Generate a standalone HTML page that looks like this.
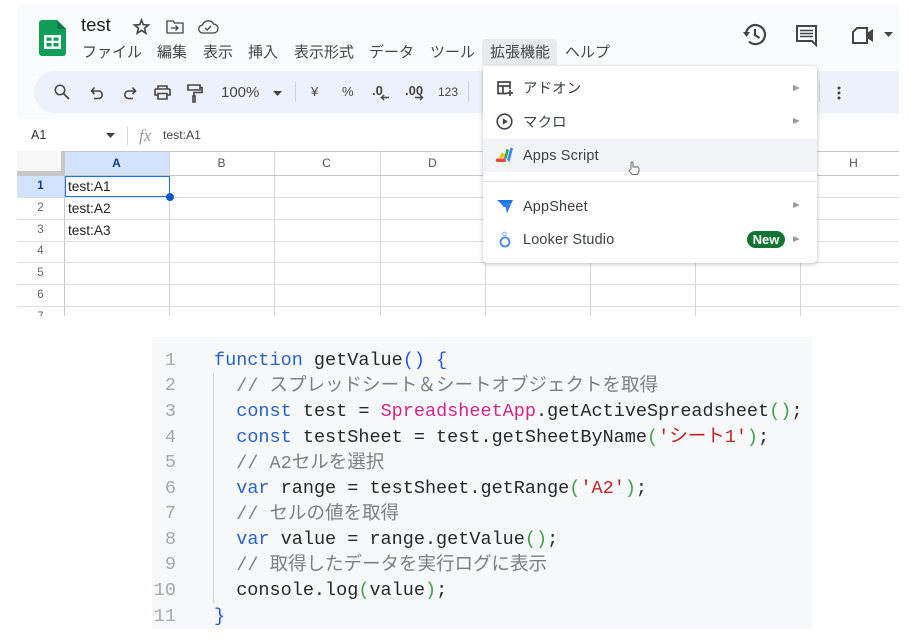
<!DOCTYPE html>
<html lang="ja"><head><meta charset="utf-8"><style>
html,body{margin:0;padding:0;background:#fff}
body{width:909px;height:640px;position:relative;overflow:hidden;font-family:"Liberation Sans","Noto Sans CJK JP",sans-serif;color:#333;filter:blur(.3px)}
.a,.a2{position:absolute;white-space:pre}
.m{position:absolute;top:44px;font-size:15px;line-height:18px;color:#444;white-space:pre}
svg{position:absolute;overflow:visible}
.ic{fill:none;stroke:#444;stroke-width:1.6}
.tb{position:absolute;top:84px;font-size:13px;line-height:16px;color:#444}
.ln{position:absolute;background:#dcdcdc}
.ch{position:absolute;top:156px;font-size:12px;line-height:14px;color:#555;text-align:center;width:105px}
.rh{position:absolute;left:17px;width:47px;text-align:center;font-size:11.5px;line-height:13px;color:#666}
.cell{position:absolute;left:68px;font-size:13.7px;line-height:16px;color:#222}
.mi{position:absolute;left:523px;font-size:14.4px;line-height:18px;color:#3c4043;white-space:pre;letter-spacing:.2px}
.ar{position:absolute;left:793px;width:0;height:0;border-left:7px solid #999;border-top:3.5px solid transparent;border-bottom:3.5px solid transparent}
.code{position:absolute;left:152px;top:337px;width:660px;height:292px;background:#f7f8fa}
.l{position:absolute;left:214px;font:18.5px/26px "Liberation Mono","Noto Sans CJK JP",monospace;color:#24292e;white-space:pre}
.n{position:absolute;width:24px;left:152px;text-align:right;font:18.5px/26px "Liberation Mono",monospace;color:#a3a8ad}
.k{color:#2a62c0}.c{color:#7b7f84}.p{color:#d0288a}.g{color:#3fa14f}.s{color:#b8262a}.b{color:#1f55e0}
</style></head><body>
<!-- Sheets header -->
<div style="position:absolute;left:17px;top:5px;width:882px;height:146px;background:#f9fbfd"></div>
<div style="position:absolute;left:34px;top:71px;width:865px;height:42px;background:#edf2fa;border-radius:21px 0 0 21px"></div>
<div style="position:absolute;left:17px;top:119px;width:882px;height:32px;background:#fff"></div>
<div style="position:absolute;left:482px;top:39px;width:75px;height:26px;background:#e8ebee;border-radius:4px 4px 0 0"></div>

<svg style="left:39px;top:20px" width="27" height="36" viewBox="0 0 27 36"><path d="M3 0H18L27 9V33a3 3 0 0 1-3 3H3a3 3 0 0 1-3-3V3a3 3 0 0 1 3-3z" fill="#0f9d58"/><path d="M18 0L27 9H20a2 2 0 0 1-2-2z" fill="#0b7a43"/><path d="M5 15H22V29H5zM7.500 17.500V20.800H12.500V17.500zM14.500 17.500V20.800H19.500V17.500zM7.500 23V26.500H12.500V23zM14.500 23V26.500H19.500V23z" fill="#fff" fill-rule="evenodd"/></svg>
<div class="a" style="left:81px;top:14px;font-size:18.500px;line-height:22px;color:#222">test</div>
<svg style="left:133px;top:18px" width="17" height="17" viewBox="0 0 17 17"><path class="ic" d="M8.500 2L10.300 6.700L15.500 7L11.500 10.200L12.800 15.200L8.500 12.400L4.200 15.200L5.500 10.200L1.500 7L6.700 6.700z" stroke-width="1.300"/></svg>
<svg style="left:166px;top:19px" width="18" height="15" viewBox="0 0 18 15"><path class="ic" style="stroke-width:1.300" d="M1 2H7L8.500 4H17V14H1zM5 9H12M9.500 6.500L12 9L9.500 11.500"/></svg>
<svg style="left:198px;top:18px" width="20" height="16" viewBox="0 0 20 16"><path class="ic" style="stroke-width:1.300" d="M5 15A4 4 0 0 1 4.500 7A6 6 0 0 1 15.500 6A4.500 4.500 0 0 1 15.500 15zM7 10L9.200 12L13 8"/></svg>

<div class="m" style="left:82px">ファイル</div>
<div class="m" style="left:157px">編集</div>
<div class="m" style="left:203px">表示</div>
<div class="m" style="left:248px">挿入</div>
<div class="m" style="left:294px">表示形式</div>
<div class="m" style="left:369px">データ</div>
<div class="m" style="left:430px">ツール</div>
<div class="m" style="left:490px">拡張機能</div>
<div class="m" style="left:565px">ヘルプ</div>

<!-- right icons -->
<svg style="left:743px;top:23px" width="24" height="23" viewBox="0 0 24 23"><path class="ic" style="stroke-width:2.200" d="M3 11.500A9.500 9.500 0 1 1 6 18.500M12 6V12L16.500 15"/><path d="M0 9H7L3.500 14z" fill="#444"/></svg>
<svg style="left:796px;top:25px" width="22" height="21" viewBox="0 0 22 21"><path class="ic" style="stroke-width:2" d="M1 1H20V20L16 16H1z"/><path class="ic" style="stroke-width:1.500" d="M4 5.500H17M4 8.500H17M4 11.500H17"/></svg>
<svg style="left:852px;top:27px" width="22" height="17" viewBox="0 0 22 17"><path class="ic" style="stroke-width:2" d="M5 1H15V16H1V5z"/><path d="M15 6L21 2V15L15 11z" fill="#444"/></svg>
<svg style="left:884px;top:32px" width="9" height="5" viewBox="0 0 9 5"><path d="M0 0H9L4.500 5z" fill="#444"/></svg>

<!-- toolbar -->
<svg style="left:54px;top:84px" width="16" height="16" viewBox="0 0 16 16"><circle class="ic" cx="6" cy="6" r="4.700" style="stroke-width:1.500"/><path class="ic" d="M9.500 9.500L15 15" style="stroke-width:1.800"/></svg>
<svg style="left:90px;top:86px" width="14" height="14" viewBox="0 0 14 14"><path class="ic" d="M2 5H9A3.800 3.800 0 0 1 9 12.500H4M4.500 1.500L1.500 5L4.500 8"/></svg>
<svg style="left:123px;top:86px" width="14" height="14" viewBox="0 0 14 14"><path class="ic" d="M12 5H5A3.800 3.800 0 0 0 5 12.500H10M9.500 1.500L12.500 5L9.500 8"/></svg>
<svg style="left:154px;top:85px" width="17" height="15" viewBox="0 0 17 15"><path class="ic" d="M4 4V1H13V4M4 10H1V5A1 1 0 0 1 2 4H15A1 1 0 0 1 16 5V10H13M4 8.500H13V14H4z"/></svg>
<svg style="left:187px;top:84px" width="16" height="19" viewBox="0 0 16 19"><path class="ic" d="M1 1H13V6H1zM13 3.500H15V8.500H7V12M6 12H8V18H6z"/></svg>
<div class="tb" style="left:221px;font-size:15px;top:85px">100%</div>
<svg style="left:273px;top:91px" width="9" height="5" viewBox="0 0 9 5"><path d="M0 0H9L4.500 5z" fill="#444"/></svg>
<div class="ln" style="left:295px;top:81px;width:1px;height:21px;background:#cfd3d8"></div>
<div class="tb" style="left:311px">¥</div>
<div class="tb" style="left:342px">%</div>
<div class="tb" style="left:372px;font-weight:bold;font-size:13px;top:83px">.0</div>
<svg style="left:380px;top:94px" width="10" height="7" viewBox="0 0 10 7"><path class="ic" style="stroke-width:1.400" d="M9 3.500H1.500M4 1L1.500 3.500L4 6"/></svg>
<div class="tb" style="left:405px;font-weight:bold;top:83px">.00</div>
<svg style="left:414px;top:94px" width="10" height="7" viewBox="0 0 10 7"><path class="ic" style="stroke-width:1.400" d="M1 3.500H8.500M6 1L8.500 3.500L6 6"/></svg>
<div class="tb" style="left:438px;font-size:12px">123</div>
<div class="ln" style="left:468px;top:81px;width:1px;height:21px;background:#cfd3d8"></div>
<div class="ln" style="left:819px;top:81px;width:1px;height:21px;background:#cfd3d8"></div>
<svg style="left:837px;top:86px" width="4" height="14" viewBox="0 0 4 14"><circle cx="2" cy="2" r="1.500" fill="#444"/><circle cx="2" cy="7" r="1.500" fill="#444"/><circle cx="2" cy="12" r="1.500" fill="#444"/></svg>

<!-- formula bar -->
<div class="a" style="left:31px;top:127px;font-size:12.500px;line-height:16px;color:#333">A1</div>
<svg style="left:106px;top:133px" width="9" height="5" viewBox="0 0 9 5"><path d="M0 0H9L4.500 5z" fill="#444"/></svg>
<div class="ln" style="left:127px;top:127px;width:1px;height:18px;background:#d5d5d5"></div>
<div class="a" style="left:139px;top:127px;font:italic 17px/18px 'Liberation Serif',serif;color:#999">fx</div>
<div class="a" style="left:163px;top:127px;font-size:12.200px;line-height:16px;color:#444">test:A1</div>

<!-- grid -->
<div style="position:absolute;left:17px;top:151px;width:882px;height:165px;background:#fff;overflow:hidden">
<div style="position:absolute;left:0;top:0;width:882px;height:1px;background:#c7c7c7"></div>
<div style="position:absolute;left:0;top:0;width:44px;height:20px;background:#f8f8f8;border-right:4px solid #c7c7c7;border-bottom:4px solid #c7c7c7"></div>
<div style="position:absolute;left:48px;top:1px;width:104px;height:24px;background:#d3e3fd"></div>
<div style="position:absolute;left:0;top:25px;width:47px;height:22px;background:#d3e3fd"></div>
</div>
<div class="ln" style="left:64px;top:151px;width:1px;height:165px;background:#c7c7c7"></div>
<div class="ln" style="left:169px;top:151px;width:1px;height:165px;background:#d5d5d5"></div>
<div class="ln" style="left:274px;top:151px;width:1px;height:165px;background:#d5d5d5"></div>
<div class="ln" style="left:380px;top:151px;width:1px;height:165px;background:#d5d5d5"></div>
<div class="ln" style="left:485px;top:151px;width:1px;height:165px;background:#d5d5d5"></div>
<div class="ln" style="left:590px;top:151px;width:1px;height:165px;background:#d5d5d5"></div>
<div class="ln" style="left:695px;top:151px;width:1px;height:165px;background:#d5d5d5"></div>
<div class="ln" style="left:800px;top:151px;width:1px;height:165px;background:#d5d5d5"></div>
<div class="ln" style="left:17px;top:175px;width:882px;height:1px;background:#c7c7c7"></div>
<div class="ln" style="left:17px;top:197px;width:882px;height:1px;background:#e0e0e0"></div>
<div class="ln" style="left:17px;top:219px;width:882px;height:1px;background:#e0e0e0"></div>
<div class="ln" style="left:17px;top:241px;width:882px;height:1px;background:#e0e0e0"></div>
<div class="ln" style="left:17px;top:262px;width:882px;height:1px;background:#e0e0e0"></div>
<div class="ln" style="left:17px;top:284px;width:882px;height:1px;background:#e0e0e0"></div>
<div class="ln" style="left:17px;top:306px;width:882px;height:1px;background:#e0e0e0"></div>

<div class="ch" style="left:64px;font-weight:bold;color:#0b3f8a">A</div>
<div class="ch" style="left:169px">B</div>
<div class="ch" style="left:274px">C</div>
<div class="ch" style="left:380px">D</div>
<div class="ch" style="left:801px">H</div>
<div class="rh" style="top:180px;font-weight:bold;color:#0b3f8a">1</div>
<div class="rh" style="top:202px">2</div>
<div class="rh" style="top:224px">3</div>
<div class="rh" style="top:245px">4</div>
<div class="rh" style="top:267px">5</div>
<div class="rh" style="top:289px">6</div>
<div style="position:absolute;left:17px;top:311px;width:47px;height:5px;overflow:hidden"><div class="rh" style="left:0;top:0">7</div></div>
<div class="cell" style="top:179px">test:A1</div>
<div class="cell" style="top:201px">test:A2</div>
<div class="cell" style="top:223px">test:A3</div>
<div style="position:absolute;left:65px;top:176px;width:102.500px;height:19px;border:1.500px solid #1a73e8"></div>
<div style="position:absolute;left:166px;top:193px;width:8px;height:8px;border-radius:50%;background:#0b57d0"></div>

<!-- menu -->
<div style="position:absolute;left:483px;top:66px;width:334px;height:197px;background:#fff;border-radius:4px;box-shadow:0 1px 4px rgba(60,64,67,.35)"></div>
<div style="position:absolute;left:483px;top:139px;width:334px;height:33px;background:#f1f3f4"></div>
<div style="position:absolute;left:483px;top:181px;width:334px;height:1px;background:#e3e5e8"></div>
<svg style="left:497px;top:81px" width="17" height="15" viewBox="0 0 17 15"><path class="ic" style="stroke-width:1.700" d="M10 12.500H1V1H13V8M1 5H13M6 5V12.500M13 9V15M10 12H16"/></svg>
<div class="mi" style="top:80px">アドオン</div>
<div class="ar" style="top:85px"></div>
<svg style="left:496px;top:113px" width="17" height="17" viewBox="0 0 17 17"><circle class="ic" cx="8.500" cy="8.500" r="7.300" style="stroke-width:1.600"/><path d="M6.800 5.300L11.800 8.500L6.800 11.700z" fill="#444"/></svg>
<div class="mi" style="top:114px">マクロ</div>
<div class="ar" style="top:118px"></div>
<svg style="left:496px;top:147px" width="18" height="16" viewBox="0 0 18 16"><path d="M1 11.500H9.500L10 15H1.500a1.800 1.800 0 0 1-.5-3.500z" fill="#e8473c"/><path d="M3 11L6 5.500L9 7.500L7 11z" fill="#fbbc04"/><path d="M8 11L10.500 1.500L13 3L10.500 12z" fill="#34a853"/><path d="M11 13L14.500 .5L17 1.500L13.500 15z" fill="#4285f4"/></svg>
<div class="mi" style="top:147px">Apps Script</div>
<svg style="left:628px;top:161px" width="12" height="14" viewBox="0 0 12 14"><path d="M3 8V2A1 1 0 0 1 5 2V6H9A2 2 0 0 1 11 8V10L9.500 13.500H4L1 9.500L3 8z" fill="#fff" stroke="#666" stroke-width="1"/></svg>
<svg style="left:497px;top:199px" width="16" height="15" viewBox="0 0 16 15"><path d="M0 1H16L14.500 4H3.500z" fill="#1a73e8"/><path d="M3.500 4H14.500L10 14.500L8.500 8H6.500z" fill="#2f80ed"/></svg>
<div class="mi" style="top:198px">AppSheet</div>
<div class="ar" style="top:202px"></div>
<svg style="left:498px;top:230px" width="14" height="18" viewBox="0 0 14 18"><circle cx="7" cy="12" r="4.500" fill="none" stroke="#4285f4" stroke-width="1.800"/><circle cx="6.500" cy="4" r="1.800" fill="none" stroke="#9ab8f0" stroke-width="1.200"/></svg>
<div class="mi" style="top:230.500px">Looker Studio</div>
<div style="position:absolute;left:747px;top:231px;width:38px;height:17px;border-radius:9px;background:#137333;color:#fff;font-size:13px;font-weight:bold;line-height:17px;text-align:center">New</div>
<div class="ar" style="top:236px"></div>

<!-- code -->
<div class="code"></div>
<div style="position:absolute;left:213px;top:373px;width:1px;height:230px;background:#d0d2d5"></div>
<div class="n" style="top:348px">1</div>
<div class="n" style="top:373px">2</div>
<div class="n" style="top:399px">3</div>
<div class="n" style="top:425px">4</div>
<div class="n" style="top:450px">5</div>
<div class="n" style="top:476px">6</div>
<div class="n" style="top:501px">7</div>
<div class="n" style="top:527px">8</div>
<div class="n" style="top:552px">9</div>
<div class="n" style="top:578px">10</div>
<div class="n" style="top:604px">11</div>
<div class="l" style="top:348px"><span class="k">function</span> getValue<span class="b">()</span> <span class="b">{</span></div>
<div class="l" style="top:374px">  <span class="c">// スプレッドシート＆シートオブジェクトを取得</span></div>
<div class="l" style="top:399px">  <span class="k">const</span> test = <span class="p">SpreadsheetApp</span>.getActiveSpreadsheet<span class="g">()</span>;</div>
<div class="l" style="top:425px">  <span class="k">const</span> testSheet = test.getSheetByName<span class="g">(</span><span class="s">'シート1'</span><span class="g">)</span>;</div>
<div class="l" style="top:451px">  <span class="c">// A2セルを選択</span></div>
<div class="l" style="top:476px">  <span class="k">var</span> range = testSheet.getRange<span class="g">(</span><span class="s">'A2'</span><span class="g">)</span>;</div>
<div class="l" style="top:502px">  <span class="c">// セルの値を取得</span></div>
<div class="l" style="top:527px">  <span class="k">var</span> value = range.getValue<span class="g">()</span>;</div>
<div class="l" style="top:553px">  <span class="c">// 取得したデータを実行ログに表示</span></div>
<div class="l" style="top:578px">  console.log<span class="g">(</span>value<span class="g">)</span>;</div>
<div class="l" style="top:604px"><span class="b">}</span></div>
</body></html>
